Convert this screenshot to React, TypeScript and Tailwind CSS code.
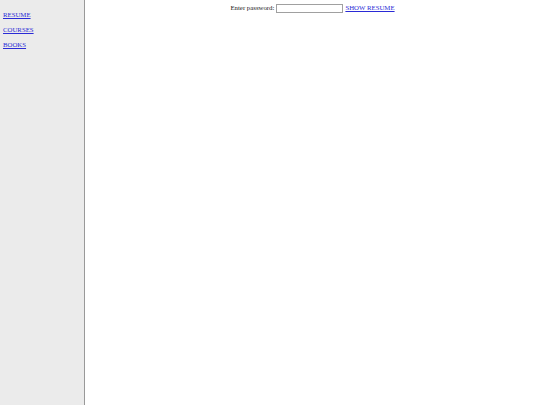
export default function App() {
  return (
    <div className="flex h-[405px] w-[540px] bg-white font-['Liberation_Serif',serif] text-[6.8px] text-[#222222]">
      <div className="flex w-[85px] shrink-0 flex-col gap-[6px] border-r border-[#999999] bg-[#ebebeb] px-[3px] pt-[10px]">
        <a href="#" className="text-[#2a2ad6] underline leading-[9px]">RESUME</a>
        <a href="#" className="text-[#2a2ad6] underline leading-[9px]">COURSES</a>
        <a href="#" className="text-[#2a2ad6] underline leading-[9px]">BOOKS</a>
      </div>
      <div className="flex-1 pt-[3px] text-center">
        <div className="flex items-center justify-center gap-[2px]">
          <span>Enter password:</span>
          <input type="password" className="h-[9px] w-[67px] border border-[#a0a0a0] bg-white" />
          <a href="#" className="text-[#2a2ad6] underline">SHOW RESUME</a>
        </div>
      </div>
    </div>
  );
}
